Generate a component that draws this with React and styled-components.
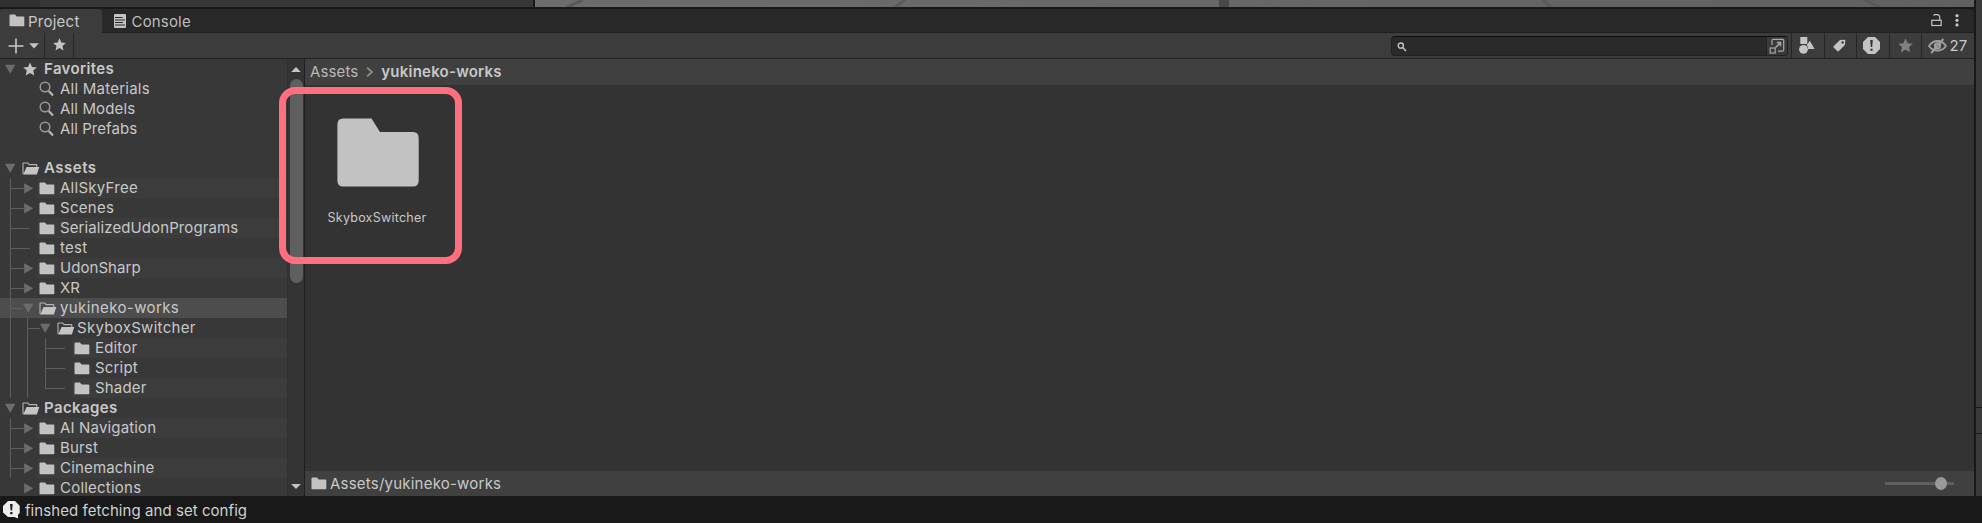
import React from "react";
import styled, { createGlobalStyle } from "styled-components";

const Global = createGlobalStyle`
  * { box-sizing: border-box; }
  body { margin: 0; background: #191919; overflow: hidden; }
`;

const Editor = styled.div`
  position: relative;
  width: 1982px;
  height: 523px;
  display: flex;
  flex-direction: column;
  overflow: hidden;
  background: #191919;
  color: #c8c8c8;
  font-family: Inter, "Liberation Sans", sans-serif;
  font-size: 15px;
  letter-spacing: 0.2px;
  white-space: nowrap;
  svg { display: block; flex: none; }
`;

const Workspace = styled.div`
  display: flex;
  height: 496px;
`;

const Dock = styled.div`
  width: 1974px;
  display: flex;
  flex-direction: column;
`;

const SideDock = styled.div`
  width: 6px;
  margin-left: 2px;
  display: flex;
  flex-direction: column;
  gap: 1px;
`;

const SidePiece = styled.div`
  background: #3a3a3a;
  height: ${(p) => p.$h}px;
`;

const SceneStrip = styled.div`
  display: flex;
  height: 7px;
  margin-bottom: 2px;
`;

const Inspector = styled.div`
  width: ${(p) => p.$w}px;
  margin-right: ${(p) => p.$gap || 0}px;
  background: ${(p) => p.$tone};
`;

const TabBar = styled.div`
  display: flex;
  height: 24px;
  background: #282828;
  border-radius: 0 4px 0 0;
`;

const Tab = styled.div`
  display: flex;
  align-items: center;
  width: ${(p) => p.$w}px;
  padding-left: ${(p) => p.$pad}px;
  gap: ${(p) => p.$gap}px;
  color: ${(p) => (p.$active ? "#c8c8c8" : "#bdbdbd")};
  background: ${(p) => (p.$active ? "#3c3c3c" : "transparent")};
  border-bottom: 1px solid ${(p) => (p.$active ? "#3c3c3c" : "#202020")};
  border-radius: ${(p) => (p.$active ? "3px 3px 0 0" : "0")};
`;

const TabLabel = styled.span`
  letter-spacing: ${(p) => p.$spacing}px;
  padding-top: 2px;
`;

const TabActions = styled.div`
  flex: 1;
  display: flex;
  justify-content: flex-end;
  gap: 13px;
  padding: 5px 15px 0 0;
  border-bottom: 1px solid #202020;
`;

const Toolbar = styled.div`
  display: flex;
  height: 26px;
  background: #3c3c3c;
  border-bottom: 1px solid #222;
`;

const ToolButton = styled.div`
  display: flex;
  align-items: center;
  justify-content: center;
  width: ${(p) => p.$w}px;
  gap: ${(p) => p.$gap || 0}px;
  padding: 0 ${(p) => p.$padRight || 0}px ${(p) => p.$lift || 0}px ${(p) => p.$padLeft || 0}px;
  ${(p) => p.$left && "border-left: 1px solid #262626;"}
  ${(p) => p.$right && "border-right: 1px solid #262626;"}
`;

const Spacer = styled.div`
  flex: 1;
`;

const SearchField = styled.div`
  display: flex;
  justify-content: space-between;
  width: 397px;
  height: 20px;
  margin: 3px 3px 0 0;
  background: #2a2a2a;
  border: 1px solid #212121;
  border-top-color: #0d0d0d;
  border-radius: 4px;
`;

const SearchGlyph = styled.div`
  padding: 5px 0 0 5px;
`;

const SearchPick = styled.div`
  width: 21px;
  padding: 1px 0 0 2px;
  background: #3a3a3a;
  border-left: 1px solid #212121;
  border-radius: 0 3px 3px 0;
`;

const Columns = styled.div`
  display: flex;
  height: 437px;
`;

const Tree = styled.div`
  width: 287px;
  height: 437px;
  overflow: hidden;
  background: #383838;
`;

const TreeRow = styled.div`
  display: flex;
  height: 20px;
  padding-left: ${(p) => (p.$root ? 5 : 10)}px;
  margin-bottom: ${(p) => p.$after || 0}px;
  background: ${(p) => (p.$selected ? "#4d4d4d" : "transparent")};
`;

const Guide = styled.div`
  width: ${(p) => p.$w}px;
  height: ${(p) => (p.$end ? 11 : 20)}px;
  ${(p) => p.$line && "border-left: 1px solid #5e5e5e;"}
  background: ${(p) =>
    p.$branch
      ? "linear-gradient(#5e5e5e, #5e5e5e) 0 10px / 100% 1px no-repeat"
      : "none"};
`;

const ArrowSlot = styled.div`
  width: ${(p) => p.$w}px;
  padding-top: 5px;
`;

const RowLabel = styled.div`
  flex: 1;
  display: flex;
  align-items: center;
  gap: ${(p) => p.$gap}px;
  padding-left: 2px;
  background: ${(p) => (p.$stripe ? "#3c3c3c" : "transparent")};
  font-weight: ${(p) => (p.$bold ? 600 : 400)};
`;

const RowText = styled.span`
  padding-bottom: 2px;
  letter-spacing: ${(p) => p.$spacing}px;
`;

const Scrollbar = styled.div`
  width: 18px;
  display: flex;
  flex-direction: column;
  align-items: center;
  background: #343434;
  border-left: 1px solid #303030;
  border-right: 1px solid #1f1f1f;
  padding: 8px 0 7px;
  justify-content: space-between;
`;

const ScrollThumb = styled.div`
  width: 13px;
  height: 204px;
  margin: 7px 0 auto 1px;
  border-radius: 7px;
  background: #5f5f5f;
`;

const Browser = styled.div`
  flex: 1;
  display: flex;
  flex-direction: column;
  background: #333;
`;

const Breadcrumb = styled.div`
  display: flex;
  align-items: center;
  height: 26px;
  padding: 0 0 1px 5px;
  background: #404040;
`;

const Crumb = styled.span`
  letter-spacing: ${(p) => p.$spacing}px;
  font-weight: ${(p) => (p.$current ? 600 : 400)};
  color: ${(p) => (p.$current ? "#c8c8c8" : "#b8b8b8")};
`;

const CrumbArrow = styled.div`
  padding: 1px 7px 0 8px;
`;

const AssetGrid = styled.div`
  flex: 1;
  padding: 33px 0 0 13px;
`;

const AssetTile = styled.div`
  width: 120px;
  display: flex;
  flex-direction: column;
  align-items: center;
  gap: 23px;
`;

const AssetName = styled.span`
  margin-right: 2px;
  font-size: 12.5px;
  line-height: 16px;
  letter-spacing: 0.25px;
`;

const PathBar = styled.div`
  display: flex;
  justify-content: space-between;
  align-items: center;
  height: 25px;
  padding: 0 20px 0 6px;
  background: #404040;
`;

const PathText = styled.div`
  display: flex;
  align-items: center;
  gap: 3px;
  letter-spacing: 0.22px;
`;

const Slider = styled.div`
  display: flex;
  align-items: center;
  width: 69px;
  height: 3px;
  padding-left: 50px;
  background: #5e5e5e;
`;

const SliderKnob = styled.div`
  width: 12px;
  height: 13px;
  flex: none;
  border-radius: 50%;
  background: #999;
`;

const StatusBar = styled.div`
  display: flex;
  align-items: center;
  gap: 5px;
  height: 27px;
  padding: 1px 0 0 3px;
  background: #191919;
  color: #d0d0d0;
  letter-spacing: 0.06px;
`;

const Highlight = styled.div`
  position: absolute;
  left: 279px;
  top: 87px;
  width: 183px;
  height: 177px;
  border: 7px solid #ff6f7d;
  border-radius: 16px;
  pointer-events: none;
`;

const Folder = () => (
  <svg width="16" height="13" viewBox="0 0 16 13">
    <path d="M1.5 .5H6L7.6 2.5H14.5Q15.3 2.5 15.3 3.4V11.4Q15.3 12.3 14.5 12.3H1.3Q.5 12.3 .5 11.4V1.5Q.5 .5 1.5 .5Z" fill="#c2c2c2" />
  </svg>
);

const FolderOpen = () => (
  <svg width="18" height="13" viewBox="0 0 18 13">
    <path d="M1 12V1.6Q1 1 1.6 1H5.7L7.2 2.6H14.2Q14.8 2.6 14.8 3.3V5" fill="none" stroke="#b4b4b4" strokeWidth="1.1" />
    <path d="M4.6 5H17.3L14.9 12.4H1.2Z" fill="#c4c4c4" />
  </svg>
);

const STAR =
  "M7 .4L9 4.9L13.8 5.4L10.2 8.6L11.3 13.4L7 10.9L2.7 13.4L3.8 8.6L.2 5.4L5 4.9Z";

const Star = ({ size = 14, color = "#c4c4c4" }) => (
  <svg width={size} height={size} viewBox="0 0 14 14">
    <path d={STAR} fill={color} />
  </svg>
);

const Magnifier = () => (
  <svg width="16" height="16" viewBox="0 0 16 16" fill="none">
    <circle cx="6" cy="6" r="4.8" stroke="#999" strokeWidth="1.5" />
    <path d="M9.8 10L14 14.4" stroke="#b8b8b8" strokeWidth="2.1" />
  </svg>
);

const ArrowDown = () => (
  <svg width="11" height="10" viewBox="0 0 11 10">
    <path d="M0 .7H10.4L5.2 9.8Z" fill="#6c6c6c" />
  </svg>
);

const ArrowRight = () => (
  <svg width="10" height="11" viewBox="0 0 10 11">
    <path d="M.2 .2L9.2 5.3L.2 10.5Z" fill="#6c6c6c" />
  </svg>
);

const ScrollArrow = ({ down }) => (
  <svg width="10" height="5" viewBox="0 0 10 5">
    <path d={down ? "M.2 0H9.8L5 5Z" : "M.2 5H9.8L5 0Z"} fill="#c4c4c4" />
  </svg>
);

const ConsoleIcon = () => (
  <svg width="12" height="14" viewBox="0 0 12 14">
    <path d="M1 0H11Q12 0 12 1V13Q12 14 11 14H1Q0 14 0 13V1Q0 0 1 0Z" fill="#c4c4c4" />
    <path d="M1 3.5H8.5M1 6H11M1 8.5H9M1 11H11" stroke="#282828" strokeWidth="1.1" />
  </svg>
);

const ICONS = {
  folder: <Folder />,
  open: <FolderOpen />,
  star: <Star />,
  search: <Magnifier />,
};

// depth 0 = section header, kind "fav" = saved search below Favorites
const ROWS = [
  { text: "Favorites", ls: 0.35, depth: 0, icon: "star", arrow: "down", lead: 6, gap: 7 },
  { text: "All Materials", ls: 0.23, kind: "fav" },
  { text: "All Models", ls: 0.14, kind: "fav" },
  { text: "All Prefabs", ls: 0.08, kind: "fav", after: 19 },
  { text: "Assets", ls: 0.5, depth: 0, icon: "open", arrow: "down" },
  { text: "AllSkyFree", ls: 0.27, depth: 1, arrow: "right", stripe: true },
  { text: "Scenes", ls: 0.3, depth: 1, arrow: "right" },
  { text: "SerializedUdonPrograms", ls: 0.1, depth: 1, stripe: true },
  { text: "test", ls: 0.3, depth: 1 },
  { text: "UdonSharp", ls: 0.05, depth: 1, arrow: "right", stripe: true },
  { text: "XR", ls: 0.1, depth: 1, arrow: "right" },
  { text: "yukineko-works", ls: 0.4, depth: 1, arrow: "down", icon: "open", selected: true },
  { text: "SkyboxSwitcher", ls: 0.3, depth: 2, arrow: "down", icon: "open", gap: 2 },
  { text: "Editor", ls: 0.17, depth: 3, stripe: true },
  { text: "Script", ls: 0.17, depth: 3 },
  { text: "Shader", ls: 0.17, depth: 3, stripe: true, end: true },
  { text: "Packages", ls: 0.4, depth: 0, icon: "open", arrow: "down" },
  { text: "AI Navigation", ls: 0.16, depth: 1, arrow: "right", stripe: true },
  { text: "Burst", ls: 0.17, depth: 1, arrow: "right" },
  { text: "Cinemachine", ls: 0.18, depth: 1, arrow: "right", stripe: true },
  { text: "Collections", ls: 0.22, depth: 1, arrow: "right", noGuide: true },
];

const Arrow = ({ dir }) =>
  dir === "down" ? <ArrowDown /> : dir === "right" ? <ArrowRight /> : null;

function Row({ row }) {
  if (row.kind === "fav") {
    return (
      <TreeRow $after={row.after}>
        <Guide $w={27} />
        <RowLabel $gap={5}>
          {ICONS.search}
          <RowText $spacing={row.ls}>{row.text}</RowText>
        </RowLabel>
      </TreeRow>
    );
  }
  if (row.depth === 0) {
    return (
      <TreeRow $root>
        <ArrowSlot $w={15 + (row.lead ? 1 : 0)}>
          <Arrow dir={row.arrow} />
        </ArrowSlot>
        <RowLabel $bold $gap={row.gap || 4}>
          {ICONS[row.icon]}
          <RowText $spacing={row.ls}>{row.text}</RowText>
        </RowLabel>
      </TreeRow>
    );
  }
  const open = row.icon === "open";
  return (
    <TreeRow $selected={row.selected}>
      {row.depth > 1 && <Guide $w={17} $line />}
      {row.depth > 2 && <Guide $w={18} $line />}
      {row.arrow ? (
        <>
          <Guide $w={row.depth === 1 ? (row.arrow === "down" ? 13 : 14) : 13} $line={!row.noGuide} $branch={!row.noGuide} />
          <ArrowSlot $w={row.depth === 1 ? (row.arrow === "down" ? 14 : 13) : 15}>
            <Arrow dir={row.arrow} />
          </ArrowSlot>
        </>
      ) : (
        <>
          <Guide $w={20} $line $branch $end={row.end} />
          <Guide $w={7} />
        </>
      )}
      <RowLabel $stripe={row.stripe} $gap={row.gap ?? (open ? 3 : 5)}>
        {ICONS[row.icon || "folder"]}
        <RowText $spacing={row.ls}>{row.text}</RowText>
      </RowLabel>
    </TreeRow>
  );
}

export default function App() {
  return (
    <Editor>
      <Global />
      <Workspace>
        <Dock>
          <SceneStrip>
            <Inspector $w={40} $tone="#303030" />
            <Inspector $w={493} $gap={2} $tone="#383838" />
            <svg width="1439" height="7" viewBox="0 0 1439 7">
              <defs>
                <linearGradient id="ground">
                  <stop offset="0" stopColor="#6d6d6f" />
                  <stop offset="1" stopColor="#616163" />
                </linearGradient>
              </defs>
              <rect width="1439" height="7" fill="url(#ground)" />
              <path d="M32 7L48 0M360 7L370 0M1008 0L1016 7M1328 -1L1346 8" stroke="#5a5a5d" strokeWidth="3" />
              <rect x="684" width="10" height="7" fill="#464849" />
            </svg>
          </SceneStrip>

          <TabBar>
            <Tab $active $w={102} $pad={9} $gap={3}>
              <Folder />
              <TabLabel $spacing={0.25}>Project</TabLabel>
            </Tab>
            <Tab $w={110} $pad={12} $gap={5.5}>
              <ConsoleIcon />
              <TabLabel $spacing={0.17}>Console</TabLabel>
            </Tab>
            <TabActions>
              <svg width="11" height="13" viewBox="0 0 11 13" fill="none" stroke="#c4c4c4" strokeWidth="1.2">
                <rect x=".8" y="6.3" width="9.4" height="5.2" />
                <path d="M2.5 1.5L3.5 .7H7L8.7 2.2V6" />
              </svg>
              <svg width="4" height="13" viewBox="0 0 4 13" fill="#c4c4c4">
                <circle cx="2" cy="1.7" r="1.6" />
                <circle cx="2" cy="6.3" r="1.6" />
                <circle cx="2" cy="10.9" r="1.6" />
              </svg>
            </TabActions>
          </TabBar>

          <Toolbar>
            <ToolButton $w={45} $right $gap={5} $padLeft={2}>
              <svg width="16" height="16" viewBox="0 0 16 16">
                <path d="M8 .5V15.5M.5 8H15.5" stroke="#c8c8c8" strokeWidth="1.6" />
              </svg>
              <svg width="10" height="6" viewBox="0 0 10 6">
                <path d="M.2 .2H9.8L5 5.4Z" fill="#c4c4c4" />
              </svg>
            </ToolButton>
            <ToolButton $w={29} $right $lift={2}>
              <Star size={13} />
            </ToolButton>
            <Spacer />
            <SearchField>
              <SearchGlyph>
                <svg width="10" height="10" viewBox="0 0 10 10" fill="none" stroke="#c4c4c4">
                  <circle cx="3.8" cy="3.6" r="2.6" strokeWidth="1.4" />
                  <path d="M5.8 5.8L9 9" strokeWidth="1.5" />
                </svg>
              </SearchGlyph>
              <SearchPick>
                <svg width="16" height="16" viewBox="0 0 16 16" fill="none" stroke="#a8a8a8" strokeWidth="1.2">
                  <path d="M3 7V2.4Q3 1.3 4 1.3H13.6Q14.7 1.3 14.7 2.4V12Q14.7 13.2 13.6 13.2H9" />
                  <rect x="1.2" y="10" width="5" height="5" />
                  <path d="M6.5 9.5L11.3 4.8M7.8 4.6H11.5V8.3" strokeWidth="1.5" />
                </svg>
              </SearchPick>
            </SearchField>
            <ToolButton $w={33} $left $padRight={2}>
              <svg width="16" height="17" viewBox="0 0 16 17" fill="#c4c4c4">
                <rect x="1.3" y="0" width="7" height="7" />
                <circle cx="4.5" cy="12.3" r="4.4" />
                <path d="M10.8 3.8L15.6 12H9Q9.2 9.3 7.7 8.2Z" />
              </svg>
            </ToolButton>
            <ToolButton $w={32} $left $padRight={2}>
              <svg width="13" height="13" viewBox="0 0 13 13">
                <path d="M7 1L11.4 .8Q12.3 .8 12.3 1.8L11.9 6L5.6 12.2Q4.9 12.7 4.2 12L.7 8.5Q.2 7.7 .8 7Z" fill="#c4c4c4" />
                <circle cx="9.6" cy="3.5" r="1.2" fill="#3c3c3c" />
              </svg>
            </ToolButton>
            <ToolButton $w={33} $left $padRight={3}>
              <svg width="17" height="17" viewBox="0 0 17 17">
                <path d="M5 0H12L17 5V12L12 17H5L0 12V5Z" fill="#c4c4c4" />
                <path d="M7.2 3H9.8L9.2 10H7.8ZM7.4 11.7H9.6V13.8H7.4Z" fill="#333" />
              </svg>
            </ToolButton>
            <ToolButton $w={32} $left $padRight={1}>
              <Star size={15} color="#808080" />
            </ToolButton>
            <ToolButton $w={53} $left $gap={2}>
              <svg width="19" height="16" viewBox="0 0 19 16" fill="none" stroke="#a0a0a0">
                <path d="M1 8Q4.5 3 9.3 3Q14.5 3 18 8Q14.5 12.7 9.3 12.7Q4.5 12.7 1 8Z" strokeWidth="1.8" />
                <circle cx="9.5" cy="7.8" r="2.6" strokeWidth="2" />
                <path d="M3.2 15L15.3 1" strokeWidth="2" />
              </svg>
              <span>27</span>
            </ToolButton>
          </Toolbar>

          <Columns>
            <Tree>
              {ROWS.map((row) => (
                <Row key={row.text} row={row} />
              ))}
            </Tree>
            <Scrollbar>
              <ScrollArrow />
              <ScrollThumb />
              <ScrollArrow down />
            </Scrollbar>
            <Browser>
              <Breadcrumb>
                <Crumb $spacing={0.12}>Assets</Crumb>
                <CrumbArrow>
                  <svg width="8" height="10" viewBox="0 0 8 10">
                    <path d="M1.2 .7L6 5L1.2 9.3" fill="none" stroke="#909090" strokeWidth="1.7" />
                  </svg>
                </CrumbArrow>
                <Crumb $current $spacing={0.22}>yukineko-works</Crumb>
              </Breadcrumb>
              <AssetGrid>
                <AssetTile>
                  <svg width="82" height="69" viewBox="0 0 82 69">
                    <path d="M6 .4H34.5L43 14H76Q81.7 14 81.7 20V62.5Q81.7 68.5 76 68.5H6Q.4 68.5 .4 62.5V6.4Q.4 .4 6 .4Z" fill="#c2c2c2" />
                  </svg>
                  <AssetName>SkyboxSwitcher</AssetName>
                </AssetTile>
              </AssetGrid>
              <PathBar>
                <PathText>
                  <Folder />
                  <span>Assets/yukineko-works</span>
                </PathText>
                <Slider>
                  <SliderKnob />
                </Slider>
              </PathBar>
            </Browser>
          </Columns>
        </Dock>
        <SideDock>
          <SidePiece $h={407} />
          <SidePiece $h={25} />
          <SidePiece $h={62} />
        </SideDock>
      </Workspace>
      <StatusBar>
        <svg width="17" height="18" viewBox="0 0 17 18">
          <path d="M5 0H12L16.7 4.8V12L15 13.8V17.5L11.5 16H5L0 11.5V5Z" fill="#eee" />
          <path d="M7 3H9.7L9.1 9.6H7.6ZM7.2 11H9.5V13.3H7.2Z" fill="#222" />
        </svg>
        <span>finshed fetching and set config</span>
      </StatusBar>
      <Highlight />
    </Editor>
  );
}
